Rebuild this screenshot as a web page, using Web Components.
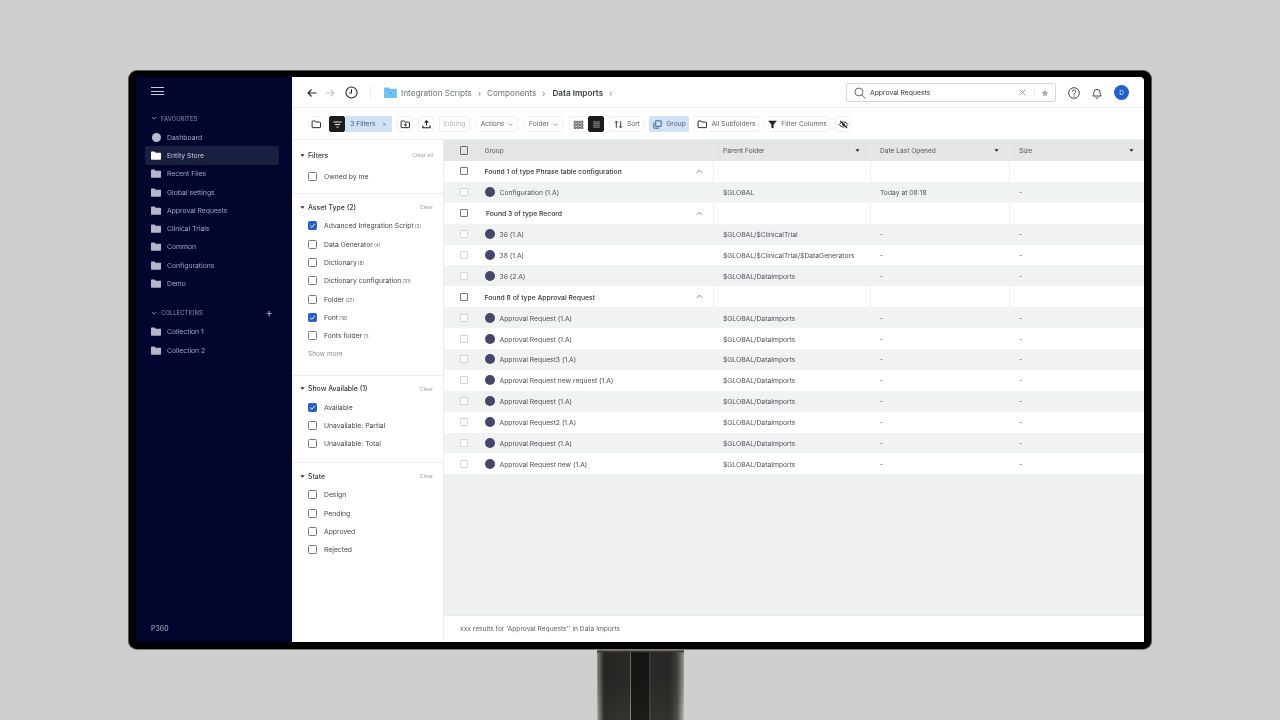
<!DOCTYPE html>
<html lang="en">
<head>
<meta charset="utf-8">
<title>Data Imports</title>
<style>
  html, body { margin: 0; height: 720px; overflow: hidden; background: #cfcfcf; font-family: Inter, "Liberation Sans", sans-serif; }
</style>
</head>
<body>
<monitor-frame>
  <app-sidebar></app-sidebar>
  <app-topbar></app-topbar>
  <app-toolbar></app-toolbar>
  <filter-panel></filter-panel>
  <result-table></result-table>
</monitor-frame>

<script>
const ICONS = {
  folderLine: '<path d="M1.500 3.500a.8.8 0 0 1 .8-.8h3.400l1.300 1.500h5.200a.8.8 0 0 1 .8.8v6a.8.8 0 0 1-.8.8H2.300a.8.8 0 0 1-.8-.8z" fill="none" stroke="currentColor" stroke-width="1.300"/>',
  folderPlus: '<path d="M1.500 3.500a.8.8 0 0 1 .8-.8h3.400l1.300 1.500h5.200a.8.8 0 0 1 .8.8v6a.8.8 0 0 1-.8.8H2.300a.8.8 0 0 1-.8-.8z" fill="none" stroke="currentColor" stroke-width="1.300"/><path d="M7.500 6v4M5.500 8h4" stroke="currentColor" stroke-width="1.200"/>',
  upload: '<path d="M7.500 9V2.500M5 5l2.500-2.500L10 5M2.500 9v3h10V9" fill="none" stroke="currentColor" stroke-width="1.500"/>',
  filterLines: '<path d="M2 4h11M4 7.500h7M6 11h3" stroke="currentColor" stroke-width="1.400"/>',
  grid: '<path d="M1.500 3h3v2.600h-3zM6 3h3v2.600H6zM10.500 3h3v2.600h-3zM1.500 7h3v2.600h-3zM6 7h3v2.600H6zM10.500 7h3v2.600h-3zM1.500 11h3v1.800h-3zM6 11h3v1.800H6zM10.500 11h3v1.800h-3z" fill="none" stroke="currentColor" stroke-width=".9"/>',
  list: '<path d="M3 3h9v9H3z" fill="currentColor" opacity=".45"/><path d="M3 5h9M3 7.500h9M3 10h9" stroke="#1c1c1c" stroke-width=".8"/>',
  sort: '<path d="M4.500 12V3M2.500 5l2-2 2 2M10.500 3v9M8.500 10l2 2 2-2" fill="none" stroke="currentColor" stroke-width="1.200"/>',
  group: '<path d="M5 2.500h7.500v7.500H5z" fill="none" stroke="currentColor" stroke-width="1.300"/><path d="M2.500 5v7.500H10" fill="none" stroke="currentColor" stroke-width="1.300"/>',
  funnel: '<path d="M1.500 2.500h12l-4.500 5v5.500l-3-1.500v-4z" fill="currentColor"/>',
  eyeOff: '<path d="M1.500 7.500c3-4.500 9-4.500 12 0-3 4.500-9 4.500-12 0z" fill="none" stroke="currentColor" stroke-width="1.300"/><circle cx="7.500" cy="7.500" r="1.800" fill="currentColor"/><path d="M3 2.500l9.500 10" stroke="currentColor" stroke-width="1.500"/>'
};

function svg(name, size) {
  return `<svg viewBox="0 0 15 15" width="${size}" height="${size}" aria-hidden="true">${ICONS[name]}</svg>`;
}

class MonitorFrame extends HTMLElement {
  constructor() {
    super();
    this.attachShadow({ mode: 'open' });
    this.shadowRoot.innerHTML = `
    <style>
      :host { display: block; width: 1024px; margin: 70px auto 0; filter: blur(.35px); }
      .bezel {
        box-sizing: border-box;
        height: 580px;
        padding: 6px 7px 7px;
        background: #000;
        border: 1px solid #55564f;
        border-bottom-color: #7c7c74;
        border-radius: 9px;
      }
      .screen {
        height: 100%;
        display: grid;
        grid-template-columns: 156px 152px 1fr;
        grid-template-rows: 31px 32px 1fr;
        border-radius: 0 4px 0 0;
        overflow: hidden;
        background: #fff;
      }
      ::slotted(app-sidebar) { grid-row: 1 / 4; }
      ::slotted(app-topbar), ::slotted(app-toolbar) { grid-column: 2 / 4; }
      .stand {
        width: 87px;
        height: 70px;
        margin: 0 auto;
        background:
          linear-gradient(180deg, #86867f 0, #3a3936 1.500px, rgba(0,0,0,.2) 3px, rgba(0,0,0,.2) 30px, rgba(0,0,0,0) 70px),
          linear-gradient(90deg, #c2c2be 0, #8d8c87 1.500px, #2f2e2b 7px, #353431 32.500px, #85857f 33px, #85857f 33.800px, #1b1b19 34.500px, #1c1c1a 52px, #484743 52.500px, #484743 53.200px, #33322f 54px, #33322f 73px, #4f4e49 80px, #9a9a94 85px, #c2c2be 87px);
      }
    </style>
    <div class="bezel"><div class="screen"><slot></slot></div></div>
    <div class="stand"></div>`;
  }
}

class NavItem extends HTMLElement {
  constructor() {
    super();
    this.attachShadow({ mode: 'open' });
  }
  connectedCallback() {
    const round = this.hasAttribute('round');
    const icon = round
      ? '<span class="dot"></span>'
      : `<svg viewBox="0 0 14 12" width="10" height="9"><path d="M0 1.500a1 1 0 0 1 1-1h4l1.500 1.500H13a1 1 0 0 1 1 1V11a1 1 0 0 1-1 1H1a1 1 0 0 1-1-1z" fill="currentColor"/></svg>`;
    this.shadowRoot.innerHTML = `
    <style>
      :host {
        display: flex;
        align-items: center;
        gap: 6px;
        height: 18.300px;
        margin: 0 13px 0 9px;
        padding-left: 6px;
        font-size: 6.800px;
        color: #a4a8bf;
        border-radius: 2px;
      }
      :host([active]) { background: #17203f; color: #c4c7d8; }
      svg { flex: none; color: #b4b7ca; }
      :host([active]) svg { color: #fff; }
      .dot { width: 9px; height: 9px; margin: 0 .5px; border-radius: 50%; background: #b9bccd; flex: none; }
    </style>
    ${icon}<slot></slot>`;
  }
}

class NavSection extends HTMLElement {
  constructor() {
    super();
    this.attachShadow({ mode: 'open' });
    this.shadowRoot.innerHTML = `
    <style>
      :host { display: block; }
      .head {
        display: flex;
        align-items: center;
        gap: 4px;
        height: 12px;
        margin-bottom: 4px;
        padding: 0 19px 0 15px;
        font-size: 5.800px;
        letter-spacing: .1px;
        color: #9296ae;
      }
      .plus { margin-left: auto; font-size: 11px; color: #b9bccd; line-height: 12px; }
    </style>
    <div class="head">
      <svg viewBox="0 0 8 8" width="6" height="6"><path d="M1 2.500l3 3 3-3" fill="none" stroke="#b9bccd"/></svg>
      <span>${this.getAttribute('label')}</span>
      ${this.hasAttribute('addable') ? '<span class="plus">+</span>' : ''}
    </div>
    <slot></slot>`;
  }
}

class AppSidebar extends HTMLElement {
  constructor() {
    super();
    this.attachShadow({ mode: 'open' });
    this.shadowRoot.innerHTML = `
    <style>
      :host {
        display: flex;
        flex-direction: column;
        background: #02062e;
        padding: 7px 0 8px;
        box-sizing: border-box;
        font-family: Inter, "Liberation Sans", sans-serif;
      }
      .burger { box-sizing: border-box; width: 13px; height: 8px; margin: 3px 0 17px 15px; border-top: 1px solid #c9ccdc; border-bottom: 1px solid #c9ccdc; position: relative; }
      .burger::after { content: ""; position: absolute; left: 0; right: 0; top: 2.500px; height: 1px; background: #c9ccdc; }
      nav-section + nav-section { margin-top: 14px; }
      .brand { margin-top: auto; padding-left: 15px; font-size: 7px; line-height: 10px; color: #b4b7ca; }
    </style>
    <div class="burger"></div>
    <nav-section label="FAVOURITES">
      <nav-item round>Dashboard</nav-item>
      <nav-item active>Entity Store</nav-item>
      <nav-item>Recent Files</nav-item>
      <nav-item>Global settings</nav-item>
      <nav-item>Approval Requests</nav-item>
      <nav-item>Clinical Trials</nav-item>
      <nav-item>Common</nav-item>
      <nav-item>Configurations</nav-item>
      <nav-item>Demo</nav-item>
    </nav-section>
    <nav-section label="COLLECTIONS" addable>
      <nav-item>Collection 1</nav-item>
      <nav-item>Collection 2</nav-item>
    </nav-section>
    <div class="brand">P360</div>`;
  }
}

class AppTopbar extends HTMLElement {
  constructor() {
    super();
    this.attachShadow({ mode: 'open' });
    this.shadowRoot.innerHTML = `
    <style>
      :host {
        display: flex;
        align-items: center;
        padding: 1px 15px 0;
        border-bottom: 1px solid #f0f1f1;
        box-sizing: border-box;
        font-size: 8.200px;
        color: #6d7074;
      }
      .nav { display: flex; align-items: center; gap: 8px; }
      .sep { width: 1px; height: 15px; background: #eceded; margin: 0 13px 0 12px; }
      .crumbs { display: flex; align-items: center; gap: 6px; }
      .crumbs b { font-weight: 600; color: #3c3e42; margin-left: 1px; }
      .crumbs i { font-style: normal; color: #777; font-size: 8px; }
      .crumbs svg { margin-right: -2px; }
      .search {
        display: flex;
        align-items: center;
        box-sizing: border-box;
        width: 210px;
        height: 19px;
        margin-left: auto;
        padding: 0 6px 0 7px;
        border: 1px solid #d6d8d8;
        border-radius: 2px;
        font-size: 6.800px;
        color: #333;
      }
      .search span { margin-left: 4px; flex: 1; }
      .search .end { flex: none; padding-left: 6px; border-left: 1px solid #eceded; margin-left: 8px; height: 11px; display: flex; align-items: center; }
      .actions { display: flex; align-items: center; gap: 11px; margin-left: 12px; }
      .avatar { width: 15px; height: 15px; border-radius: 50%; background: #1f62cc; color: #dbe6f7; font-size: 6.500px; display: grid; place-items: center; }
    </style>
    <div class="nav">
      <svg viewBox="0 0 10 10" width="10" height="10"><path d="M9.500 5H1M4.500 1.500L1 5l3.500 3.500" fill="none" stroke="#222" stroke-width="1.100"/></svg>
      <svg viewBox="0 0 10 10" width="10" height="10"><path d="M.5 5H9M5.500 1.500L9 5 5.500 8.500" fill="none" stroke="#c4c6c8" stroke-width="1.100"/></svg>
      <svg viewBox="0 0 14 14" width="13" height="13" style="margin-left:2px"><circle cx="7" cy="7" r="6" fill="none" stroke="#222" stroke-width="1.100"/><path d="M7 3.500V7.500H4.500" fill="none" stroke="#222" stroke-width="1.100"/></svg>
    </div>
    <div class="sep"></div>
    <div class="crumbs">
      <svg viewBox="0 0 14 12" width="13" height="11"><path d="M0 1.500a1 1 0 0 1 1-1h4l1.500 1.500H13a1 1 0 0 1 1 1V11a1 1 0 0 1-1 1H1a1 1 0 0 1-1-1z" fill="#6ec1ec"/><path d="M5.800 6h2.400L7 7.300z" fill="#2a6fb0"/></svg>
      <span>Integration Scripts</span><i>›</i>
      <span>Components</span><i>›</i>
      <b>Data Imports</b><i>›</i>
    </div>
    <div class="search">
      <svg viewBox="0 0 14 14" width="12" height="12"><circle cx="5.800" cy="5.800" r="4.600" fill="none" stroke="#555" stroke-width="1"/><path d="M9.200 9.200l4 4" stroke="#555" stroke-width="1"/></svg>
      <span>Approval Requests</span>
      <svg viewBox="0 0 8 8" width="7" height="7"><path d="M.8.800l6.400 6.400M7.200.8L.8 7.200" stroke="#8a8c8e" stroke-width=".9"/></svg>
      <span class="end"><svg viewBox="0 0 10 10" width="8" height="8"><path d="M5 .5l1.400 2.900 3.100.4-2.300 2.200.6 3.200L5 7.700 2.200 9.200l.6-3.200L.5 3.800l3.100-.4z" fill="#a9abad"/></svg></span>
    </div>
    <div class="actions">
      <svg viewBox="0 0 14 14" width="12" height="12"><circle cx="7" cy="7" r="6.200" fill="none" stroke="#222" stroke-width="1"/><path d="M5 5.500a2 2 0 1 1 3.200 1.600C7.400 7.700 7 8 7 9M7 10v1.200" fill="none" stroke="#222" stroke-width="1"/></svg>
      <svg viewBox="0 0 14 14" width="12" height="12"><path d="M2 10.500c1-1 1.300-2 1.300-4a3.700 3.700 0 0 1 7.400 0c0 2 .3 3 1.300 4zM5.500 12.200a1.600 1.600 0 0 0 3 0" fill="none" stroke="#222" stroke-width="1"/></svg>
      <span class="avatar">D</span>
    </div>`;
  }
}

class ToolButton extends HTMLElement {
  constructor() {
    super();
    this.attachShadow({ mode: 'open' });
  }
  connectedCallback() {
    const icon = this.getAttribute('icon');
    const caret = this.hasAttribute('caret');
    this.shadowRoot.innerHTML = `
    <style>
      :host {
        display: inline-flex;
        align-items: center;
        justify-content: center;
        gap: 3px;
        box-sizing: border-box;
        height: 15.500px;
        width: 16px;
        flex: none;
        border: 1px solid #f1f2f2;
        border-radius: 2px;
        background: #fff;
        font-size: 6.700px;
        color: #5c5f63;
        white-space: nowrap;
      }
      :host([tone="dark"]) { background: #1c1c1c; border-color: #1c1c1c; color: #eee; }
      :host([tone="blue"]) { background: #cfe2f7; border-color: #cfe2f7; color: #4a5a6e; }
      :host([tone="muted"]) { color: #b3b5b7; }
      svg { flex: none; color: #222; }
      :host([tone="dark"]) svg { color: #eee; }
      :host([tone="blue"]) svg { color: #3f5f85; }
      .caret { color: #666; margin-left: 1px; }
    </style>
    ${icon ? svg(icon, 11) : ''}<slot></slot>
    ${caret ? '<svg class="caret" viewBox="0 0 8 8" width="5" height="5"><path d="M1 2.500l3 3 3-3" fill="none" stroke="currentColor" stroke-width="1"/></svg>' : ''}`;
  }
}

class AppToolbar extends HTMLElement {
  constructor() {
    super();
    this.attachShadow({ mode: 'open' });
    this.shadowRoot.innerHTML = `
    <style>
      :host {
        display: flex;
        align-items: center;
        gap: 5px;
        padding: 1px 0 0 16px;
        border-bottom: 1px solid #eef0f0;
        box-sizing: border-box;
        font-family: Inter, "Liberation Sans", sans-serif;
      }
      .join { display: flex; }
      .wide { margin-left: 1px; }
    </style>
    <tool-button icon="folderLine"></tool-button>
    <div class="join">
      <tool-button tone="dark" icon="filterLines"></tool-button>
      <tool-button tone="blue" style="width:47px">3 Filters&nbsp;&nbsp;<span style="color:#7d8a9c">×</span></tool-button>
    </div>
    <tool-button icon="folderPlus"></tool-button>
    <tool-button icon="upload"></tool-button>
    <tool-button tone="muted" style="width:31px">Editing</tool-button>
    <tool-button caret class="wide" style="width:42px">Actions</tool-button>
    <tool-button caret class="wide" style="width:39px">Folder</tool-button>
    <div class="join wide">
      <tool-button icon="grid" style="width:19px"></tool-button>
      <tool-button tone="dark" icon="list"></tool-button>
    </div>
    <tool-button icon="sort" style="width:35px">Sort</tool-button>
    <tool-button tone="blue" icon="group" style="width:40px">Group</tool-button>
    <tool-button icon="folderLine" style="width:65px">All Subfolders</tool-button>
    <tool-button icon="funnel" style="width:66px">Filter Columns</tool-button>
    <tool-button icon="eyeOff"></tool-button>`;
  }
}

class FilterCheck extends HTMLElement {
  constructor() {
    super();
    this.attachShadow({ mode: 'open' });
  }
  connectedCallback() {
    const count = this.getAttribute('count');
    this.shadowRoot.innerHTML = `
    <style>
      :host { display: flex; align-items: center; gap: 7px; height: 18.300px; padding-left: 16px; font-size: 6.800px; color: #44464a; }
      .box { box-sizing: border-box; width: 9px; height: 9px; border: 1px solid #77797c; border-radius: 1.500px; background: #fff; display: grid; place-items: center; flex: none; }
      :host([checked]) .box { background: #2a5fc4; border-color: #2a5fc4; }
      small { font-size: 4.800px; color: #6a6c70; margin-left: 1px; }
    </style>
    <span class="box">${this.hasAttribute('checked') ? '<svg viewBox="0 0 8 8" width="7" height="7"><path d="M1.300 4.200l1.900 1.900 3.500-4" fill="none" stroke="#fff" stroke-width="1.100"/></svg>' : ''}</span>
    <span><slot></slot>${count ? `<small>(${count})</small>` : ''}</span>`;
  }
}

class FilterGroup extends HTMLElement {
  constructor() {
    super();
    this.attachShadow({ mode: 'open' });
    this.shadowRoot.innerHTML = `
    <style>
      :host { display: block; padding: 5px 0 9px; border-top: 1px solid #eceded; }
      :host([lead]) { border-top: 0; padding: 7px 0 8px; }
      .head { display: flex; align-items: center; height: 16px; margin-bottom: 1.500px; padding: 0 10px 0 8px; }
      :host([lead]) .head { margin-bottom: 4px; }
      .head svg { margin-right: 3px; }
      .title { font-size: 6.900px; font-weight: 500; color: #333539; }
      .clear { margin-left: auto; font-size: 5.400px; color: #a3a5a7; }
    </style>
    <div class="head">
      <svg viewBox="0 0 6 6" width="5" height="5"><path d="M.5 1.500h5L3 4.500z" fill="#222"/></svg>
      <span class="title">${this.getAttribute('label')}</span>
      <span class="clear">${this.getAttribute('clear') || 'Clear'}</span>
    </div>
    <slot></slot>`;
  }
}

class FilterPanel extends HTMLElement {
  constructor() {
    super();
    this.attachShadow({ mode: 'open' });
    this.shadowRoot.innerHTML = `
    <style>
      :host { display: block; background: #fff; border-right: 1px solid #eceded; box-sizing: border-box; font-family: Inter, "Liberation Sans", sans-serif; }
      .more { display: block; height: 18.300px; line-height: 18.300px; padding-left: 16px; margin-bottom: 2.500px; font-size: 6.500px; color: #8a8c8f; }
    </style>
    <filter-group lead label="Filters" clear="Clear all">
      <filter-check>Owned by me</filter-check>
    </filter-group>
    <filter-group label="Asset Type (2)">
      <filter-check checked count="2">Advanced Integration Script</filter-check>
      <filter-check count="4">Data Generator</filter-check>
      <filter-check count="8">Dictionary</filter-check>
      <filter-check count="10">Dictionary configuration</filter-check>
      <filter-check count="27">Folder</filter-check>
      <filter-check checked count="18">Font</filter-check>
      <filter-check count="1">Fonts folder</filter-check>
      <span class="more">Show more</span>
    </filter-group>
    <filter-group label="Show Available (1)">
      <filter-check checked>Available</filter-check>
      <filter-check>Unavailable: Partial</filter-check>
      <filter-check>Unavailable: Total</filter-check>
    </filter-group>
    <filter-group label="State">
      <filter-check>Design</filter-check>
      <filter-check>Pending</filter-check>
      <filter-check>Approved</filter-check>
      <filter-check>Rejected</filter-check>
    </filter-group>`;
  }
}

const COLUMNS = 'grid-template-columns: 269px 157px 139px 1fr;';

class ResultRow extends HTMLElement {
  constructor() {
    super();
    this.attachShadow({ mode: 'open' });
  }
  connectedCallback() {
    const group = this.hasAttribute('group');
    const inset = this.getAttribute('inset') || 0;
    const first = group
      ? `<span class="t" style="margin-left:${inset}px"><slot></slot></span>
         <svg class="up" viewBox="0 0 8 8" width="7" height="7"><path d="M1 5.500l3-3 3 3" fill="none" stroke="#666" stroke-width=".9"/></svg>`
      : `<span class="ball"></span><span class="t"><slot></slot></span>`;
    this.shadowRoot.innerHTML = `
    <style>
      :host { display: grid; ${COLUMNS} height: 20.900px; font-size: 6.750px; color: #4c4e52; background: #fff; }
      :host([shade]) { background: #f1f3f3; }
      :host([group]) { font-weight: 500; font-size: 6.800px; color: #35373b; }
      .cell { display: flex; align-items: center; min-width: 0; padding-left: 9px; border-left: 1px solid transparent; }
      :host([group]) .cell + .cell { border-left-color: #eef0f0; }
      .main { padding-left: 15.500px; border-left: 0; }
      .t { padding-top: 1px; }
      .box { box-sizing: border-box; width: 8px; height: 8px; margin-right: 17px; flex: none; border: 1px solid #d4d6d7; border-radius: 1px; background: #fff; }
      :host([group]) .box { border-color: #77797c; }
      .ball { width: 10px; height: 10px; margin-right: 5px; border-radius: 50%; background: #44466a; flex: none; }
      .up { margin-left: auto; margin-right: 10px; }
    </style>
    <div class="cell main"><span class="box"></span>${first}</div>
    <div class="cell"><span class="t">${this.getAttribute('parent') || ''}</span></div>
    <div class="cell"><span class="t">${group ? '' : this.getAttribute('date') || '-'}</span></div>
    <div class="cell"><span class="t">${group ? '' : '-'}</span></div>`;
  }
}

class ResultTable extends HTMLElement {
  constructor() {
    super();
    this.attachShadow({ mode: 'open' });
    const head = ['Parent Folder', 'Date Last Opened', 'Size'].map(label => `
      <div class="th">${label}<svg viewBox="0 0 6 6" width="5" height="5"><path d="M.5 1.500h5L3 4.500z" fill="#222"/></svg></div>`).join('');
    this.shadowRoot.innerHTML = `
    <style>
      :host { display: flex; flex-direction: column; background: #eff1f1; min-height: 0; font-family: Inter, "Liberation Sans", sans-serif; }
      .head { display: grid; ${COLUMNS} height: 21px; flex: none; background: #e4e6e6; font-size: 6.600px; color: #4f5155; }
      .th { display: flex; align-items: center; justify-content: space-between; padding: 0 10px 0 9px; border-left: 1px solid #eceeee; }
      .th:first-child { justify-content: flex-start; padding-left: 15.500px; border-left: 0; }
      .th i { box-sizing: border-box; width: 8.500px; height: 8.500px; margin-right: 16.500px; border: 1px solid #6d6f72; border-radius: 1px; }
      .rows { flex: 1; min-height: 0; }
      .foot { flex: none; height: 26px; display: flex; align-items: center; padding-left: 16px; background: #fff; border-top: 1px solid #e8eaea; font-size: 6.650px; color: #5f6165; }
    </style>
    <div class="head"><div class="th"><i></i>Group</div>${head}</div>
    <div class="rows">
      <result-row group>Found 1 of type Phrase table configuration</result-row>
      <result-row shade parent="$GLOBAL" date="Today at 08:18">Configuration (1.A)</result-row>
      <result-row group inset="1.500">Found 3 of type Record</result-row>
      <result-row shade parent="$GLOBAL/$ClinicalTrial">36 (1.A)</result-row>
      <result-row parent="$GLOBAL/$ClinicalTrial/$DataGenerators">38 (1.A)</result-row>
      <result-row shade parent="$GLOBAL/DataImports">36 (2.A)</result-row>
      <result-row group>Found 8 of type Approval Request</result-row>
      <result-row shade parent="$GLOBAL/DataImports">Approval Request (1.A)</result-row>
      <result-row parent="$GLOBAL/DataImports">Approval Request (1.A)</result-row>
      <result-row shade parent="$GLOBAL/DataImports">Approval Request3 (1.A)</result-row>
      <result-row parent="$GLOBAL/DataImports">Approval Request new request (1.A)</result-row>
      <result-row shade parent="$GLOBAL/DataImports">Approval Request (1.A)</result-row>
      <result-row parent="$GLOBAL/DataImports">Approval Request2 (1.A)</result-row>
      <result-row shade parent="$GLOBAL/DataImports">Approval Request (1.A)</result-row>
      <result-row parent="$GLOBAL/DataImports">Approval Request new (1.A)</result-row>
    </div>
    <div class="foot">xxx results for 'Approval Requests'' in Data Imports</div>`;
  }
}

customElements.define('nav-item', NavItem);
customElements.define('nav-section', NavSection);
customElements.define('app-sidebar', AppSidebar);
customElements.define('app-topbar', AppTopbar);
customElements.define('tool-button', ToolButton);
customElements.define('app-toolbar', AppToolbar);
customElements.define('filter-check', FilterCheck);
customElements.define('filter-group', FilterGroup);
customElements.define('filter-panel', FilterPanel);
customElements.define('result-row', ResultRow);
customElements.define('result-table', ResultTable);
customElements.define('monitor-frame', MonitorFrame);
</script>
</body>
</html>
